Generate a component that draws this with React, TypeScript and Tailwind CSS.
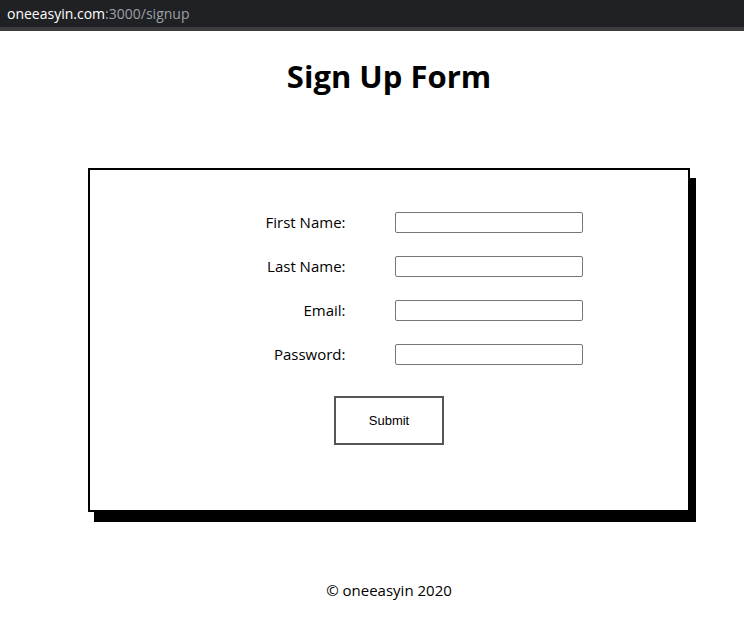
import React from "react";

const fields = ["First Name:", "Last Name:", "Email:", "Password:"];

export default function App() {
  return (
    <div className="w-[744px] h-[618px] overflow-hidden bg-white">
      {/* browser address strip */}
      <div className="h-[27px] bg-[#202124] flex items-center pl-[7px] text-[14px] font-['Open_Sans',sans-serif]">
        <span className="text-white">oneeasyin.com</span>
        <span className="text-[#9aa0a6]">:3000/signup</span>
      </div>
      <div className="h-[4px] bg-[#3c3c3c]" />

      <div className="w-[778px] flex flex-col items-center font-['Open_Sans',sans-serif] text-black">
        <h1 className="mt-[25px] text-[31px] font-bold leading-[40px]">Sign Up Form</h1>

        <div className="mt-[72px] w-[602px] h-[344px] border-2 border-black shadow-[6px_10px_0_0_#000] flex flex-col items-center pt-[42px]">
          <div className="grid grid-cols-[150px_188px] gap-x-[49px] gap-y-[23px] items-center">
            {fields.map((f) => (
              <React.Fragment key={f}>
                <label className="text-right text-[15px] leading-[21px]">{f}</label>
                <input className="h-[21px] border border-[#767676] rounded-[2px]" />
              </React.Fragment>
            ))}
          </div>
          <button className="mt-[31px] w-[110px] h-[49px] border-2 border-[#555] bg-white text-[13px] font-['Liberation_Sans',sans-serif]">
            Submit
          </button>
        </div>

        <p className="mt-[67px] text-[15px]">© oneeasyin 2020</p>
      </div>
    </div>
  );
}
